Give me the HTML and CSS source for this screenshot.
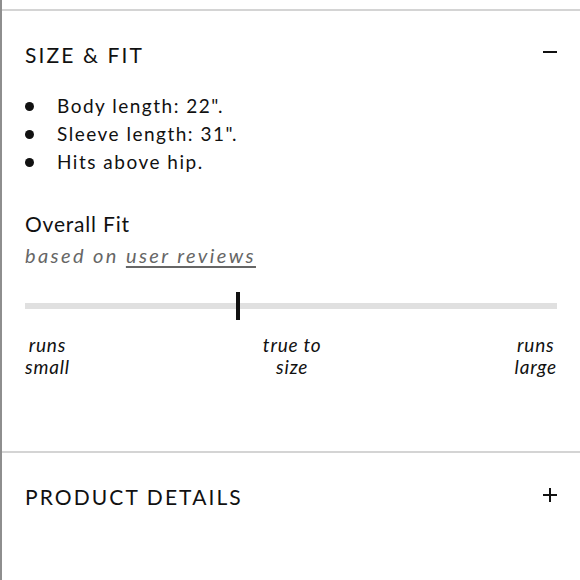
FILE: index.html
```html
<!DOCTYPE html>
<html lang="en">
<head>
<meta charset="utf-8">
<title>Size &amp; Fit</title>
<link rel="stylesheet" href="styles.css">
</head>
<body>
<div class="page">
  <section class="panel open">
    <div class="panel-head">
      <h2 class="panel-title">SIZE &amp; FIT</h2>
      <svg class="toggle" width="14" height="24" viewBox="0 0 14 24" aria-hidden="true"><rect x="0" y="8" width="14" height="2" fill="#111"/></svg>
    </div>
    <ul class="specs">
      <li>Body length: 22".</li>
      <li>Sleeve length: 31".</li>
      <li>Hits above hip.</li>
    </ul>
    <h3 class="fit-title">Overall Fit</h3>
    <p class="fit-sub">based on <a href="#" class="fit-link">user reviews</a></p>
    <div class="fit-bar">
      <div class="fit-track"></div>
      <div class="fit-marker" style="left: 40%;"></div>
    </div>
    <div class="fit-labels">
      <span class="fit-label">runs<br>small</span>
      <span class="fit-label">true to<br>size</span>
      <span class="fit-label">runs<br>large</span>
    </div>
  </section>
  <section class="panel closed">
    <div class="panel-head">
      <h2 class="panel-title">PRODUCT DETAILS</h2>
      <svg class="toggle" width="14" height="24" viewBox="0 0 14 24" aria-hidden="true"><rect x="0" y="9" width="14" height="2" fill="#111"/><rect x="6" y="3" width="2" height="14" fill="#111"/></svg>
    </div>
  </section>
</div>
</body>
</html>
```

FILE: styles.css
```css
html, body {
  margin: 0;
  padding: 0;
  background: #fff;
}
body {
  font-family: "Lato", "Noto Sans", sans-serif;
  color: #111;
}
.page {
  min-height: 580px;
  border-left: 2px solid #8e8e8e;
  padding-top: 9px;
  box-sizing: border-box;
}
.panel {
  border-top: 2px solid #d4d4d4;
  padding: 32px 23px 0 23px;
}
.panel.open {
  padding-bottom: 73px;
}
.panel-head {
  display: flex;
  justify-content: space-between;
  align-items: flex-start;
}
.panel-title {
  margin: 0;
  font-size: 21px;
  line-height: 24px;
  font-weight: 400;
  letter-spacing: 2.1px;
}
.toggle {
  display: block;
}
.specs {
  list-style: none;
  margin: 25px 0 0 0;
  padding: 0;
}
.specs li {
  display: flex;
  align-items: center;
  font-size: 19px;
  line-height: 28px;
  letter-spacing: 1.5px;
}
.specs li::before {
  content: "";
  width: 9px;
  height: 9px;
  border-radius: 50%;
  background: #111;
  margin-right: 23px;
  flex: none;
}
.fit-title {
  margin: 35px 0 0 0;
  font-size: 21px;
  line-height: 26px;
  font-weight: 400;
  letter-spacing: 0.8px;
}
.fit-sub {
  margin: 5px 0 0 0;
  font-size: 20px;
  line-height: 26px;
  font-style: italic;
  color: #666;
  letter-spacing: 2.4px;
}
.fit-link {
  color: #666;
  text-decoration: underline;
  text-decoration-thickness: 1.5px;
  text-underline-offset: 3px;
}
.fit-bar {
  position: relative;
  height: 28px;
  margin-top: 24px;
  display: flex;
  align-items: center;
}
.fit-track {
  flex: 1;
  height: 6px;
  background: #e0e0e0;
}
.fit-marker {
  position: absolute;
  top: 0;
  width: 4px;
  height: 28px;
  margin-left: -2px;
  background: #111;
}
.fit-labels {
  display: flex;
  justify-content: space-between;
  margin-top: 14px;
}
.fit-label {
  font-size: 19px;
  line-height: 22px;
  font-style: italic;
  text-align: center;
  letter-spacing: 0.8px;
}
```
